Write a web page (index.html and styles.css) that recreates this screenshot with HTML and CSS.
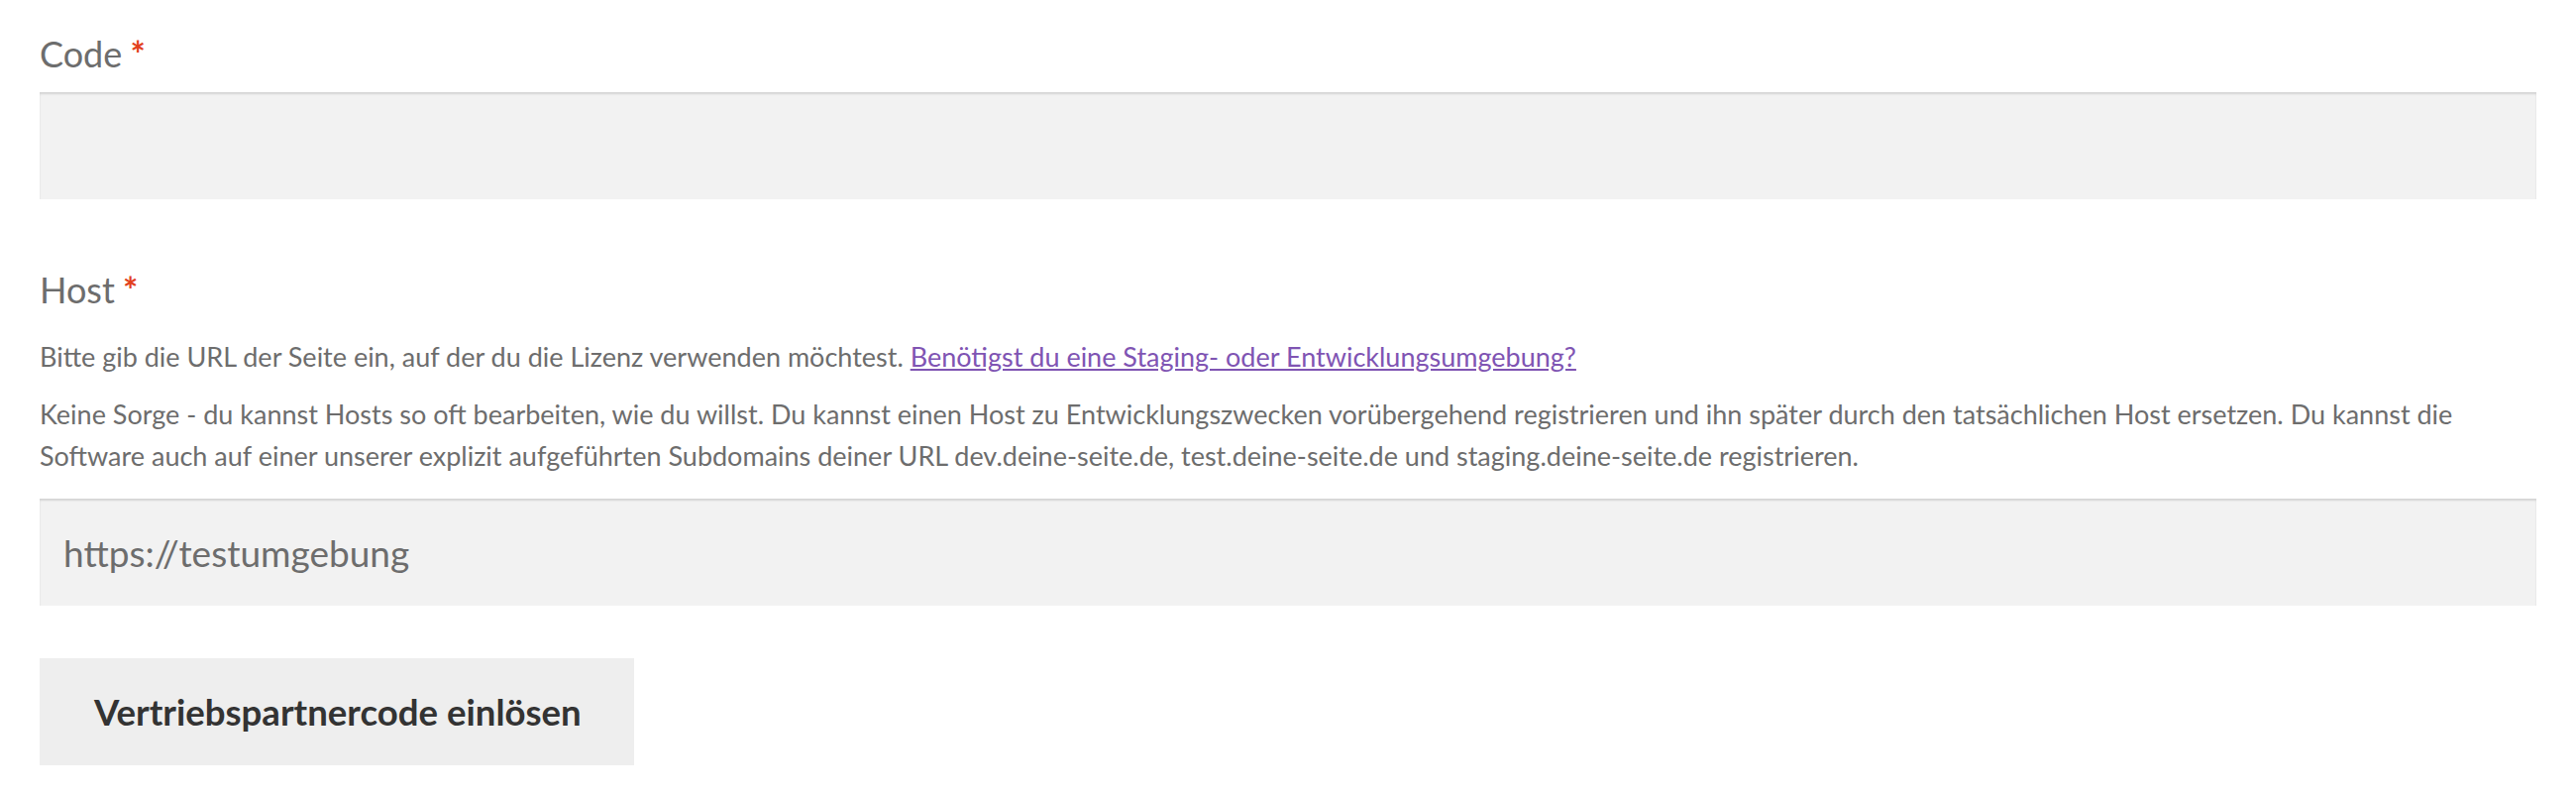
FILE: index.html
```html
<!DOCTYPE html>
<html lang="de">
<head>
<meta charset="utf-8">
<title>Vertriebspartnercode einlösen</title>
<link rel="stylesheet" href="styles.css">
</head>
<body>
<form class="redeem-form">
  <div class="field field--code">
    <label class="field-label" for="code">Code <abbr class="required" title="erforderlich">*</abbr></label>
    <input class="field-input" type="text" id="code" name="code">
  </div>
  <div class="field field--host">
    <label class="field-label" for="host">Host <abbr class="required" title="erforderlich">*</abbr></label>
    <div class="field-help">
      <p class="help-line">Bitte gib die URL der Seite ein, auf der du die Lizenz verwenden möchtest. <a class="help-link" href="#">Benötigst du eine Staging- oder Entwicklungsumgebung?</a></p>
      <p class="help-line">Keine Sorge - du kannst Hosts so oft bearbeiten, wie du willst. Du kannst einen Host zu Entwicklungszwecken vorübergehend registrieren und ihn später durch den tatsächlichen Host ersetzen. Du kannst die Software auch auf einer unserer explizit aufgeführten Subdomains deiner URL dev.deine-seite.de, test.deine-seite.de und staging.deine-seite.de registrieren.</p>
    </div>
    <input class="field-input" type="text" id="host" name="host" value="https://testumgebung">
  </div>
  <button class="submit-button" type="button">Vertriebspartnercode einlösen</button>
</form>
</body>
</html>
```

FILE: styles.css
```css
html, body {
  margin: 0;
  padding: 0;
  background: #ffffff;
}

body {
  font-family: "Lato", "Liberation Sans", sans-serif;
  color: #6d6d6d;
}

.redeem-form {
  display: flex;
  flex-direction: column;
  align-items: flex-start;
  padding: 29px 40px 0 40px;
}

.field {
  display: flex;
  flex-direction: column;
  align-self: stretch;
}

.field--code {
  margin-bottom: 66px;
}

.field--host {
  margin-bottom: 53px;
}

.field-label {
  font-size: 36px;
  line-height: 50px;
  margin-bottom: 14px;
  color: #6d6d6d;
}

.field--host .field-label {
  margin-bottom: 22px;
}

.required {
  color: #e2401c;
  text-decoration: none;
  border: 0;
  font-weight: 700;
  margin-left: -1px;
}

.field-help {
  display: flex;
  flex-direction: column;
  gap: 16px;
  margin-bottom: 22px;
}

.help-line {
  margin: 0;
  font-size: 27px;
  line-height: 42px;
  color: #6d6d6d;
}

.help-link {
  color: #7f54b3;
  text-decoration: underline;
}

.field-input {
  box-sizing: border-box;
  width: 100%;
  height: 108px;
  margin: 0;
  padding: 0 24px;
  border: 0;
  background: #f2f2f2;
  box-shadow: inset 0 2px 2px rgba(0, 0, 0, 0.125);
  font-family: "Lato", "Liberation Sans", sans-serif;
  font-size: 37px;
  color: #6d6d6d;
  outline: none;
}

.submit-button {
  box-sizing: border-box;
  width: 600px;
  height: 108px;
  margin: 0;
  padding: 0 0 0 55px;
  border: 0;
  background: #eeeeee;
  color: #333333;
  font-family: "Lato", "Liberation Sans", sans-serif;
  font-size: 36.6px;
  font-weight: 700;
  text-align: left;
  cursor: pointer;
}
```
